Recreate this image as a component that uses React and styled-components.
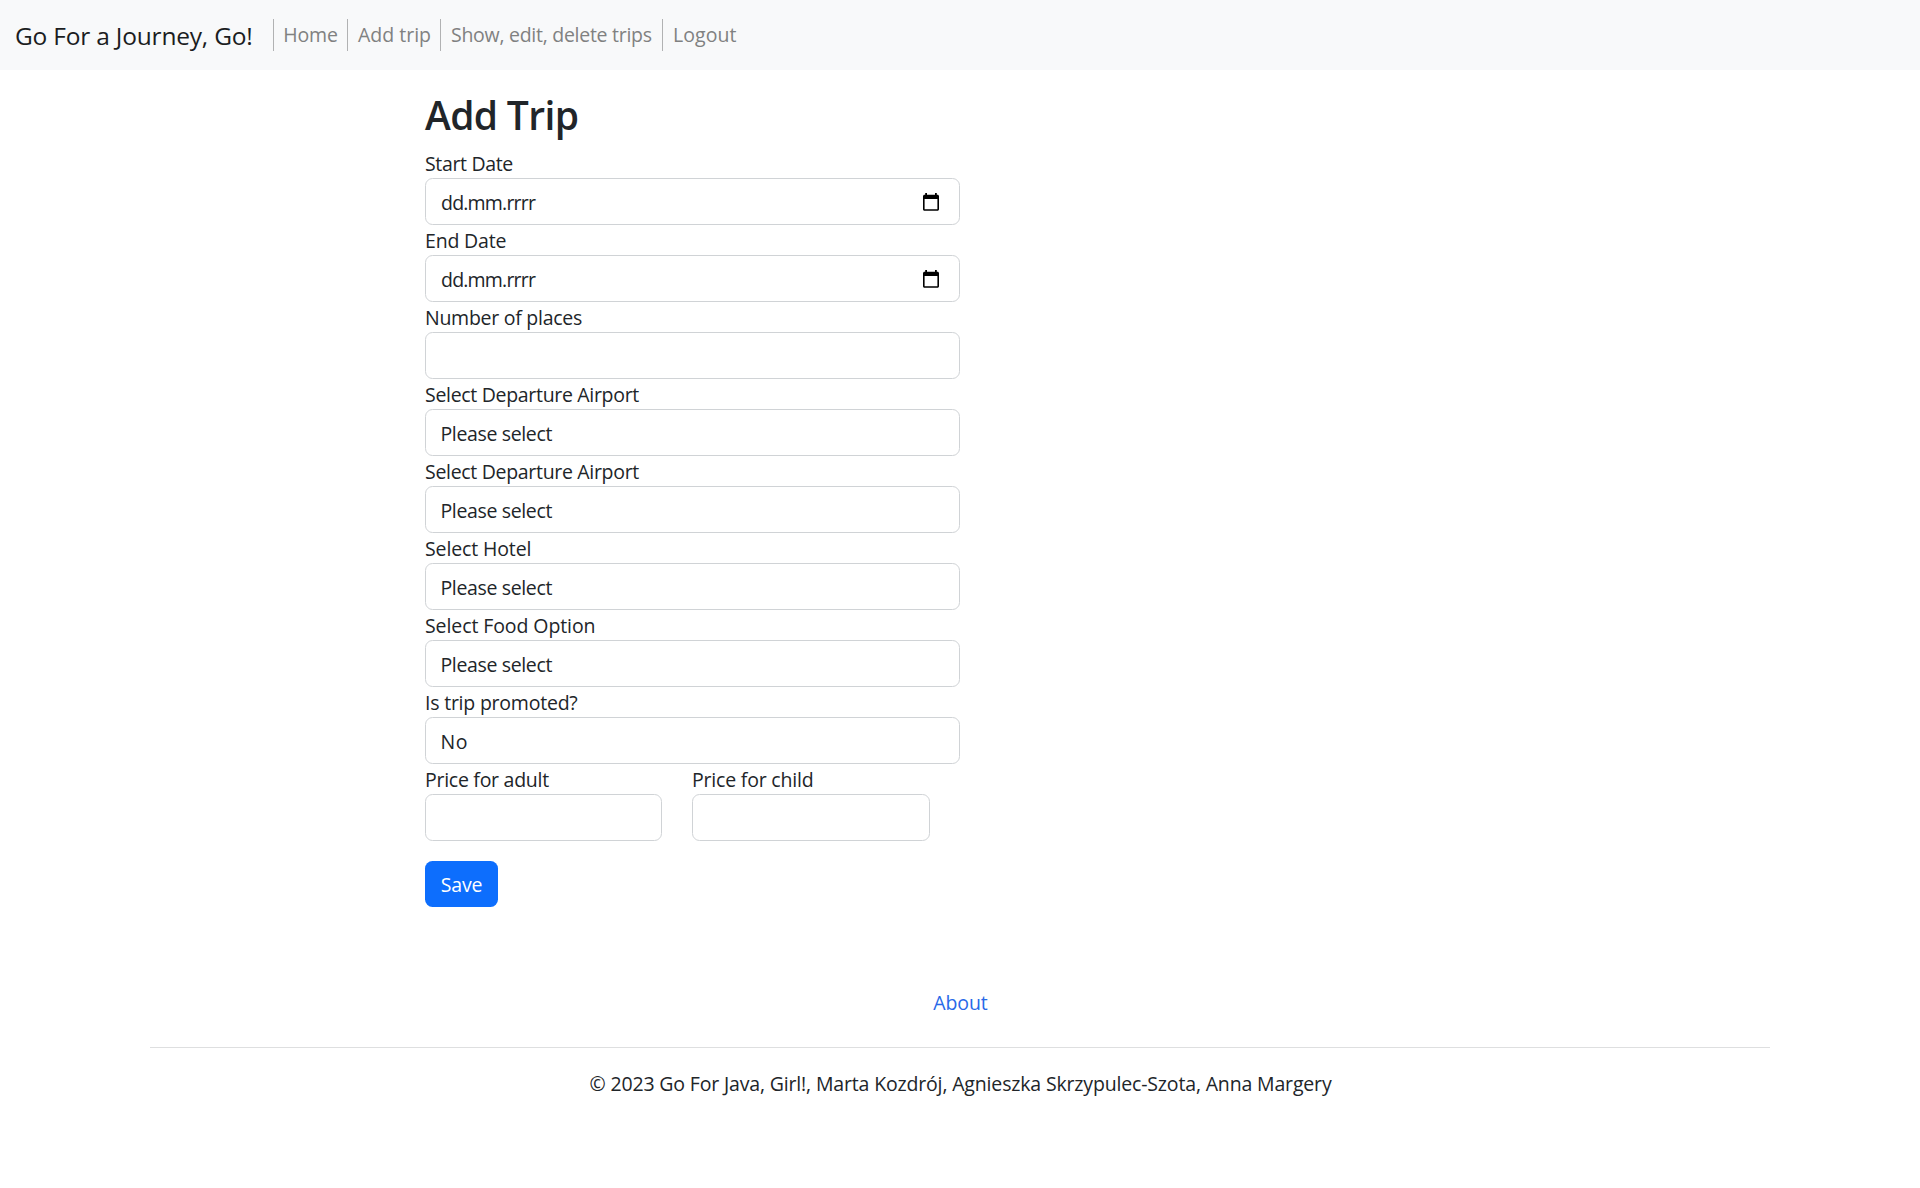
import React from "react";
import styled, { createGlobalStyle } from "styled-components";

const GlobalStyle = createGlobalStyle`
  *, *::before, *::after { box-sizing: border-box; }
  body {
    margin: 0;
    background: #fff;
    color: #212529;
    font-family: "Open Sans", "Noto Sans", sans-serif;
    font-size: 19.5px;
    line-height: 30px;
  }
`;

const Text = styled.span`
  letter-spacing: ${(p) => p.$track || 0}px;
  white-space: nowrap;
`;

const Navbar = styled.nav`
  display: flex;
  align-items: center;
  height: 70px;
  padding-left: 15px;
  background: #f8f9fa;
`;

const Brand = styled.a`
  width: 258px;
  padding-top: 2px;
  font-size: 24.5px;
  color: #1b1d1f;
`;

const NavItem = styled.a`
  width: ${(p) => p.$width}px;
  height: 32px;
  padding-left: ${(p) => p.$indent || 10}px;
  border-left: 1px solid #b1b2b3;
  line-height: 32px;
  color: #808181;
`;

const Main = styled.main`
  width: 535px;
  margin-left: 425px;
  padding-top: 20px;
`;

const Title = styled.h1`
  height: 48px;
  margin: 0 0 10px;
  padding-top: 1px;
  font-size: 39px;
  font-weight: 600;
  line-height: 48px;
`;

const Form = styled.form`
  display: flex;
  flex-direction: column;
  align-items: stretch;
`;

const Field = styled.div`
  display: flex;
  flex-direction: column;
  flex: ${(p) => (p.$half ? `0 0 ${p.$half}px` : "none")};
`;

const Label = styled.label`
  height: 30px;
  line-height: 32px;
`;

const control = `
  width: 100%;
  height: 47px;
  margin: 0;
  padding: 2px 15px 0;
  border: 1px solid #d0d3d6;
  border-radius: 7.5px;
  background: #fff;
  color: #212529;
  font: inherit;
  outline: none;
  appearance: none;
`;

const Input = styled.input`
  ${control}
`;

const Select = styled.select`
  ${control}
  padding-left: 14.5px;
  letter-spacing: ${(p) => p.$track}px;
`;

const DateBox = styled.div`
  ${control}
  display: flex;
  align-items: center;
  justify-content: space-between;
  padding-right: 20px;
`;

const PriceRow = styled.div`
  display: flex;
  gap: 30px;
`;

const SaveButton = styled.button`
  align-self: flex-start;
  width: 73px;
  height: 46px;
  margin-top: 20px;
  padding: 2px 0 0;
  border: 0;
  border-radius: 7.5px;
  background: #0d6efd;
  color: #fff;
  font: inherit;
  font-weight: 500;
`;

const Footer = styled.footer`
  display: flex;
  flex-direction: column;
  align-items: center;
  margin: 81px 150px 0;
`;

const AboutLink = styled.a`
  padding-left: 1px;
  color: #2869e8;
`;

const Divider = styled.hr`
  width: 100%;
  margin: 29px 0 21px;
  border: 0;
  border-top: 1px solid #dedfe0;
`;

const Copyright = styled.p`
  margin: 0;
  padding-left: 1px;
`;

const IconSvg = styled.svg`
  flex: none;
  margin-bottom: 2px;
`;

const CalendarIcon = () => (
  <IconSvg width="16" height="18" viewBox="0 0 16 18" fill="#000" aria-hidden="true">
    <path
      fillRule="evenodd"
      d="M2.2 0H4v1.8h8V0h1.8v1.8h.7c.8 0 1.5.7 1.5 1.5v13c0 .8-.7 1.5-1.5 1.500h-13C.7 17.800 0 17.100 0 16.300v-13C0 2.500.7 1.800 1.500 1.800h.7zM1.600 6v10.200h12.800V6z"
    />
  </IconSvg>
);

const navItems = [
  { text: "Home", width: 74, indent: 9.3, track: -0.15 },
  { text: "Add trip", width: 93 },
  { text: "Show, edit, delete trips", width: 222, track: -0.27 },
  { text: "Logout", width: 90, track: 0.05 },
];

const fields = [
  { label: "Start Date", track: -0.34, type: "date" },
  { label: "End Date", track: -0.18, type: "date" },
  { label: "Number of places", track: -0.26, type: "number" },
  { label: "Select Departure Airport", track: -0.31, value: "Please select" },
  { label: "Select Departure Airport", track: -0.31, value: "Please select" },
  { label: "Select Hotel", track: -0.13, value: "Please select" },
  { label: "Select Food Option", track: -0.09, value: "Please select" },
  { label: "Is trip promoted?", track: -0.22, value: "No", valueTrack: 0.6 },
];

function Control({ type, value, valueTrack = -0.36 }) {
  if (type === "date") {
    return (
      <DateBox>
        <Text $track={-0.8}>dd.mm.rrrr</Text>
        <CalendarIcon />
      </DateBox>
    );
  }
  if (value) {
    return (
      <Select $track={valueTrack}>
        <option>{value}</option>
      </Select>
    );
  }
  return <Input type="text" inputMode="numeric" />;
}

export default function App() {
  return (
    <>
      <GlobalStyle />
      <Navbar>
        <Brand>
          <Text $track={-0.2}>Go For a Journey, Go!</Text>
        </Brand>
        {navItems.map((item) => (
          <NavItem key={item.text} $width={item.width} $indent={item.indent}>
            <Text $track={item.track}>{item.text}</Text>
          </NavItem>
        ))}
      </Navbar>
      <Main>
        <Title>
          <Text $track={-0.65}>Add Trip</Text>
        </Title>
        <Form>
          {fields.map(({ label, track, ...rest }, i) => (
            <Field key={i}>
              <Label>
                <Text $track={track}>{label}</Text>
              </Label>
              <Control {...rest} />
            </Field>
          ))}
          <PriceRow>
            <Field $half={237}>
              <Label>
                <Text $track={-0.27}>Price for adult</Text>
              </Label>
              <Input type="text" inputMode="decimal" />
            </Field>
            <Field $half={238}>
              <Label>
                <Text $track={-0.2}>Price for child</Text>
              </Label>
              <Input type="text" inputMode="decimal" />
            </Field>
          </PriceRow>
          <SaveButton type="button">
            <Text $track={-0.2}>Save</Text>
          </SaveButton>
        </Form>
      </Main>
      <Footer>
        <AboutLink>
          <Text $track={-0.1}>About</Text>
        </AboutLink>
        <Divider />
        <Copyright>
          <Text $track={-0.16}>
            © 2023 Go For Java, Girl!, Marta Kozdrój, Agnieszka Skrzypulec-Szota, Anna Margery
          </Text>
        </Copyright>
      </Footer>
    </>
  );
}
